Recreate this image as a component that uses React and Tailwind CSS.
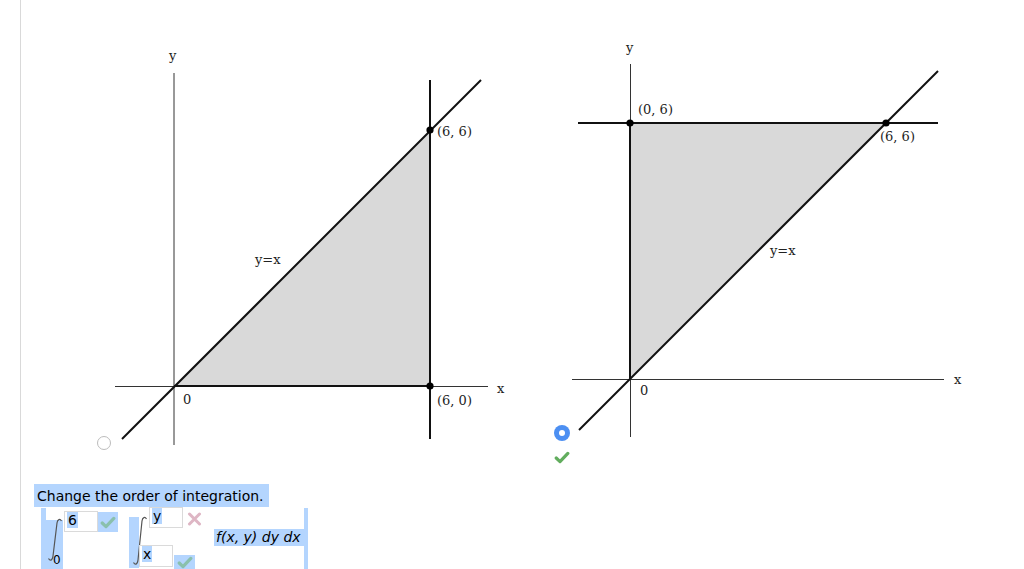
import React from "react";

const HL = "bg-[#b4d5fe]";

function Check({ faded }) {
  return (
    <svg width="16" height="13" viewBox="0 0 16 13" className={faded ? "opacity-50" : ""}>
      <path d="M2.2 7 L6 10.6 L13.8 2.4" fill="none" stroke="#62ad5e" strokeWidth="3.2" strokeLinecap="round" strokeLinejoin="round" />
    </svg>
  );
}

function Cross() {
  return (
    <svg width="15" height="14" viewBox="0 0 15 14" className="opacity-60">
      <path d="M2.5 2 L12.5 12 M12.5 2 L2.5 12" fill="none" stroke="#c9869e" strokeWidth="3" strokeLinecap="round" />
    </svg>
  );
}

function IntegralSign({ h = 48 }) {
  return (
    <svg width="18" height={h} viewBox={`0 0 18 ${h}`} className="overflow-visible">
      <path
        d={`M15.5 3 C14 0.5 11.5 1 11 5 L7 ${h - 6} C6.4 ${h - 1} 4 ${h - 1} 2.5 ${h - 3.5}`}
        fill="none"
        stroke="#555"
        strokeWidth="1.2"
      />
    </svg>
  );
}

function Label({ x, y, children }) {
  return (
    <text x={x} y={y} fontSize="13" fill="#222">
      {children}
    </text>
  );
}

function GraphOne() {
  return (
    <svg width="400" height="410" viewBox="0 0 400 410" className="block font-['DejaVu_Serif',serif]">
      <polygon points="63,346 319,90 319,346" fill="#d9d9d9" />
      <line x1="63" y1="33" x2="63" y2="405" stroke="#333" strokeWidth="1" />
      <line x1="4" y1="346.5" x2="377" y2="346.5" stroke="#333" strokeWidth="1" />
      <line x1="63" y1="346" x2="319" y2="346" stroke="#111" strokeWidth="2" />
      <line x1="319" y1="40" x2="319" y2="399" stroke="#111" strokeWidth="2" />
      <line x1="11" y1="399" x2="370" y2="40" stroke="#111" strokeWidth="2" />
      <circle cx="319" cy="90" r="3.6" fill="#000" />
      <circle cx="319" cy="346" r="3.6" fill="#000" />
      <Label x="58" y="20">y</Label>
      <Label x="386" y="353">x</Label>
      <Label x="326" y="96">(6, 6)</Label>
      <Label x="326" y="365">(6, 0)</Label>
      <Label x="72" y="364">0</Label>
      <Label x="144" y="224">y=x</Label>
    </svg>
  );
}

function GraphTwo() {
  return (
    <svg width="405" height="435" viewBox="0 0 405 435" className="block font-['DejaVu_Serif',serif]">
      <polygon points="60,344 60,88 316,88" fill="#d9d9d9" />
      <line x1="60.5" y1="29" x2="60.5" y2="402" stroke="#333" strokeWidth="1" />
      <line x1="2" y1="344.5" x2="374" y2="344.5" stroke="#333" strokeWidth="1" />
      <line x1="60" y1="88" x2="60" y2="344" stroke="#111" strokeWidth="2" />
      <line x1="8" y1="88" x2="368" y2="88" stroke="#111" strokeWidth="2" />
      <line x1="9" y1="395" x2="368" y2="36" stroke="#111" strokeWidth="2" />
      <circle cx="60" cy="88" r="3.6" fill="#000" />
      <circle cx="316" cy="88" r="3.6" fill="#000" />
      <Label x="56" y="17">y</Label>
      <Label x="384" y="349">x</Label>
      <Label x="68" y="79">(0, 6)</Label>
      <Label x="310" y="106">(6, 6)</Label>
      <Label x="200" y="220">y=x</Label>
      <Label x="70" y="360">0</Label>
    </svg>
  );
}

function LimitBox({ value, className = "" }) {
  return (
    <div className={`w-[34px] h-[21px] bg-white border border-[#dadada] pl-[2px] ${className}`}>
      <span className={`${HL} text-[14px] leading-[16px] px-[1px] inline-block align-top`}>{value}</span>
    </div>
  );
}

export default function App() {
  return (
    <div className="w-[1024px] h-[569px] bg-white overflow-hidden flex font-['DejaVu_Sans',sans-serif] text-black">
      <div className="w-[20px] shrink-0" />
      <div className="flex-1 border-l border-[#d9d9d9] flex flex-col">
        <div className="flex items-start pt-[35px]">
          <div className="flex items-end mt-[5px] ml-[76px]">
            <div className="w-[14px] h-[14px] rounded-full border border-[#bcbcbc] bg-white" />
            <GraphOne />
          </div>
          <div className="flex items-end ml-[43px]">
            <div className="flex flex-col items-center w-[16px] mb-[6px] gap-[10px]">
              <div className="w-[16px] h-[16px] rounded-full bg-[#4c8ff2] flex items-center justify-center">
                <div className="w-[6px] h-[6px] rounded-full bg-white" />
              </div>
              <Check />
            </div>
            <GraphTwo />
          </div>
        </div>

        <div className="mt-[14px] pl-[13px] flex">
          <span className={`${HL} text-[14px] leading-[22px] pl-[3px] pr-[5px] pt-[1px] block`}>
            Change the order of integration.
          </span>
        </div>

        <div className="flex items-start ml-[20px] mt-[1px] h-[62px]">
          <div className={`w-[5px] h-full ${HL}`} />
          <div className="w-[17px] h-full flex flex-col">
            <div className="h-[12px]" />
            <div className={`flex-1 ${HL} relative`}>
              <div className="-mt-[2px]">
                <IntegralSign h={44} />
              </div>
              <span className="absolute left-[7px] bottom-[3px] text-[12px] leading-[13px]">0</span>
            </div>
          </div>
          <LimitBox value="6" className="ml-[1px] mt-[3px]" />
          <div className={`w-[20px] h-[20px] mt-[4px] ${HL} flex items-center justify-center`}>
            <Check faded />
          </div>

          <div className="ml-[11px] flex items-start">
            <div className={`w-[10px] h-[51px] mt-[9px] ${HL}`}>
              <div className="ml-[2px] -mt-[1px]">
                <IntegralSign h={50} />
              </div>
            </div>
            <div className="flex flex-col -mt-[1px]">
              <div className="flex items-start">
                <LimitBox value="y" className="ml-[10px]" />
                <div className="ml-[4px] mt-[5px]">
                  <Cross />
                </div>
              </div>
              <div className="flex items-start mt-[17px]">
                <LimitBox value="x" className="h-[22px]" />
                <div className={`w-[21px] h-[15px] mt-[10px] ml-[1px] ${HL} flex justify-center pt-[1px]`}>
                  <Check faded />
                </div>
              </div>
            </div>
          </div>

          <span className={`${HL} italic text-[14px] leading-[17px] block pl-[2px] w-[90px] ml-[12px] mt-[21px]`}>
            f(x, y) dy dx
          </span>
          <div className={`w-[4px] h-full ${HL}`} />
        </div>
      </div>
    </div>
  );
}
